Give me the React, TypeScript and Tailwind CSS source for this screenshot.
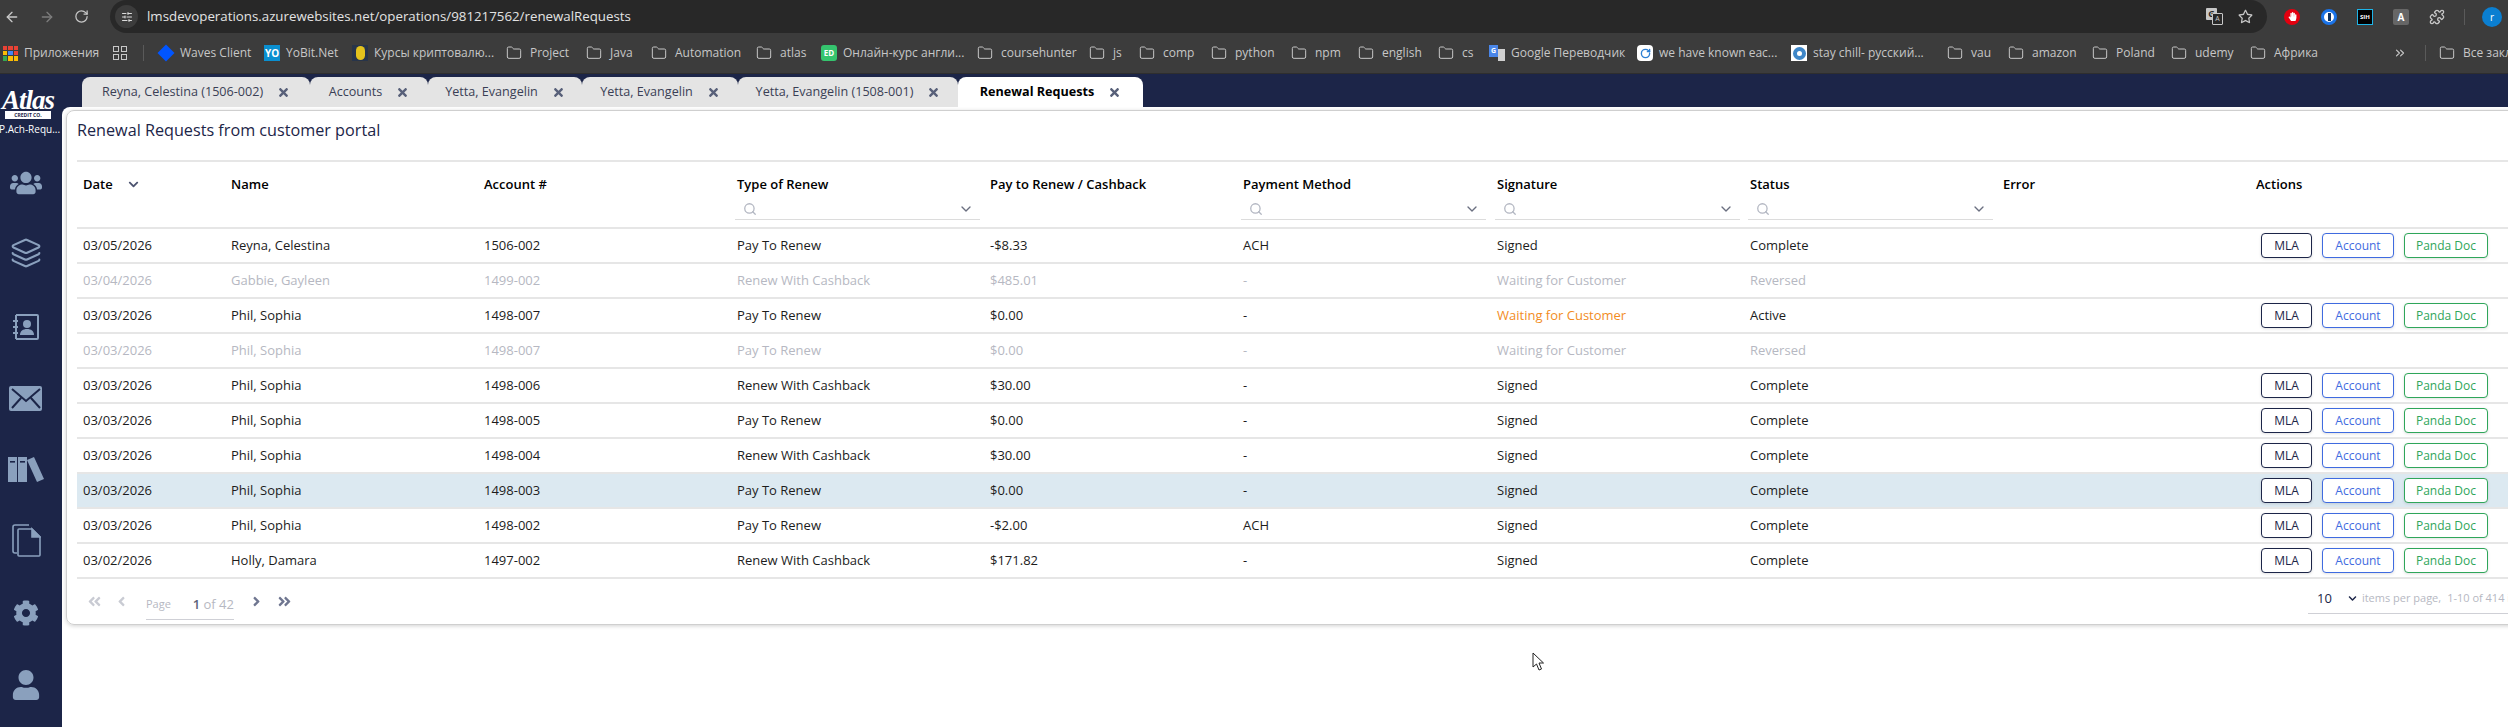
import React from "react";
import { FaCog, FaTimes, FaChevronDown, FaAngleDoubleLeft, FaAngleDoubleRight, FaAngleLeft, FaAngleRight, FaUsers, FaUser, FaRegStar, FaHandPaper } from "react-icons/fa";
import { ArrowLeft, ArrowRight, RotateCw, SlidersHorizontal, Folder, Puzzle, ChevronDown, ChevronsRight, Search, Layers } from "lucide-react";

const GRID = "grid grid-cols-[148px_253px_253px_253px_253px_254px_253px_253px_253px_260px]";

type Row = { date: string; name: string; acc: string; type: string; pay: string; method: string; sig: string; status: string; off?: boolean; orange?: boolean; sel?: boolean };
const rows: Row[] = [
  { date: "03/05/2026", name: "Reyna, Celestina", acc: "1506-002", type: "Pay To Renew", pay: "-$8.33", method: "ACH", sig: "Signed", status: "Complete" },
  { date: "03/04/2026", name: "Gabbie, Gayleen", acc: "1499-002", type: "Renew With Cashback", pay: "$485.01", method: "-", sig: "Waiting for Customer", status: "Reversed", off: true },
  { date: "03/03/2026", name: "Phil, Sophia", acc: "1498-007", type: "Pay To Renew", pay: "$0.00", method: "-", sig: "Waiting for Customer", status: "Active", orange: true },
  { date: "03/03/2026", name: "Phil, Sophia", acc: "1498-007", type: "Pay To Renew", pay: "$0.00", method: "-", sig: "Waiting for Customer", status: "Reversed", off: true },
  { date: "03/03/2026", name: "Phil, Sophia", acc: "1498-006", type: "Renew With Cashback", pay: "$30.00", method: "-", sig: "Signed", status: "Complete" },
  { date: "03/03/2026", name: "Phil, Sophia", acc: "1498-005", type: "Pay To Renew", pay: "$0.00", method: "-", sig: "Signed", status: "Complete" },
  { date: "03/03/2026", name: "Phil, Sophia", acc: "1498-004", type: "Renew With Cashback", pay: "$30.00", method: "-", sig: "Signed", status: "Complete" },
  { date: "03/03/2026", name: "Phil, Sophia", acc: "1498-003", type: "Pay To Renew", pay: "$0.00", method: "-", sig: "Signed", status: "Complete", sel: true },
  { date: "03/03/2026", name: "Phil, Sophia", acc: "1498-002", type: "Pay To Renew", pay: "-$2.00", method: "ACH", sig: "Signed", status: "Complete" },
  { date: "03/02/2026", name: "Holly, Damara", acc: "1497-002", type: "Renew With Cashback", pay: "$171.82", method: "-", sig: "Signed", status: "Complete" },
];

const tabs = [
  { t: "Reyna, Celestina (1506-002)", w: "w-[228px]" },
  { t: "Accounts", w: "w-[118px]" },
  { t: "Yetta, Evangelin", w: "w-[154px]" },
  { t: "Yetta, Evangelin", w: "w-[156px]" },
  { t: "Yetta, Evangelin (1508-001)", w: "w-[220px]" },
];

function Glyph({ kind }: { kind: string }) {
  if (kind === "folder") return <Folder size={16} strokeWidth={1.5} className="text-[#c7c7c7] shrink-0" />;
  if (kind === "waves") return <span className="w-[12px] h-[12px] mx-[2px] bg-[#0055ff] rotate-45 shrink-0" />;
  if (kind === "yo") return <span className="w-[16px] h-[16px] bg-[#0a8fd0] text-white text-[10px] font-bold leading-[16px] text-center shrink-0">YO</span>;
  if (kind === "coin") return <span className="w-[16px] h-[16px] bg-[#27344a] flex items-center justify-center shrink-0"><span className="w-[9px] h-[14px] rounded-full bg-[#e3c21d]" /></span>;
  if (kind === "ed") return <span className="w-[16px] h-[16px] rounded-[3px] bg-[#35c46e] text-white text-[8px] font-bold leading-[16px] text-center shrink-0">ED</span>;
  if (kind === "g") return <span className="w-[16px] h-[16px] flex shrink-0"><span className="w-[9px] h-[12px] bg-[#4a86e8] text-white text-[7px] leading-[12px] text-center font-bold">G</span><span className="w-[7px] h-[12px] mt-[4px] bg-[#d0d0d0]" /></span>;
  if (kind === "wk") return <span className="w-[16px] h-[16px] rounded-[4px] bg-white flex items-center justify-center shrink-0"><RotateCw size={11} strokeWidth={3} className="text-[#2d7fd3]" /></span>;
  if (kind === "stay") return <span className="w-[16px] h-[16px] bg-white flex items-center justify-center shrink-0"><span className="w-[13px] h-[13px] rounded-full border-[4px] border-[#3d86c8]" /></span>;
  return null;
}

const marks: { k: string; t: string; w: string }[] = [
  { k: "waves", t: "Waves Client", w: "w-[106px]" },
  { k: "yo", t: "YoBit.Net", w: "w-[88px]" },
  { k: "coin", t: "Курсы криптовалю...", w: "w-[154px]" },
  { k: "folder", t: "Project", w: "w-[80px]" },
  { k: "folder", t: "Java", w: "w-[65px]" },
  { k: "folder", t: "Automation", w: "w-[105px]" },
  { k: "folder", t: "atlas", w: "w-[65px]" },
  { k: "ed", t: "Онлайн-курс англи...", w: "w-[156px]" },
  { k: "folder", t: "coursehunter", w: "w-[112px]" },
  { k: "folder", t: "js", w: "w-[50px]" },
  { k: "folder", t: "comp", w: "w-[72px]" },
  { k: "folder", t: "python", w: "w-[80px]" },
  { k: "folder", t: "npm", w: "w-[67px]" },
  { k: "folder", t: "english", w: "w-[80px]" },
  { k: "folder", t: "cs", w: "w-[51px]" },
  { k: "g", t: "Google Переводчик", w: "w-[148px]" },
  { k: "wk", t: "we have known eac...", w: "w-[154px]" },
  { k: "stay", t: "stay chill- русский...", w: "w-[156px]" },
  { k: "folder", t: "vau", w: "w-[61px]" },
  { k: "folder", t: "amazon", w: "w-[84px]" },
  { k: "folder", t: "Poland", w: "w-[79px]" },
  { k: "folder", t: "udemy", w: "w-[79px]" },
  { k: "folder", t: "Африка", w: "w-[145px]" },
];

function Toolbar() {
  return (
    <div className="h-[33px] bg-[#3c3c3c] flex items-center shrink-0">
      <div className="w-[110px] flex items-center pl-[4px] gap-[19px] shrink-0">
        <ArrowLeft size={16} className="text-[#c7c7c7]" />
        <ArrowRight size={16} className="text-[#7c7c7c]" />
        <RotateCw size={15} className="text-[#c7c7c7]" />
      </div>
      <div className="w-[2157px] h-[33px] rounded-full bg-[#282828] flex items-center pl-[5px] pr-[14px] shrink-0">
        <span className="w-[23px] h-[23px] rounded-full bg-[#3c3c3c] flex items-center justify-center shrink-0">
          <SlidersHorizontal size={12} className="text-[#dcdcdc]" />
        </span>
        <span className="ml-[9px] text-[13.3px] text-[#e3e3e3]">lmsdevoperations.azurewebsites.net/operations/981217562/renewalRequests</span>
        <span className="ml-auto flex items-center gap-[15px]">
          <span className="relative w-[17px] h-[17px] block">
            <span className="absolute left-0 top-0 w-[11px] h-[12px] rounded-[1px] bg-[#c7c7c7] text-[#282828] text-[9px] font-bold leading-[12px] text-center">G</span>
            <span className="absolute right-0 bottom-0 w-[11px] h-[12px] rounded-[1px] border border-[#c7c7c7] bg-[#282828] text-[#c7c7c7] text-[7px] leading-[10px] text-center">A</span>
          </span>
          <FaRegStar size={15} className="text-[#c7c7c7]" />
        </span>
      </div>
      <div className="flex items-center ml-[17px]">
        <span className="w-[16px] h-[16px] rounded-full bg-[#e3000f] flex items-center justify-center"><FaHandPaper size={9} className="text-white" /></span>
        <span className="ml-[21px] w-[16px] h-[16px] rounded-full bg-white border-[3px] border-[#1a73e8] flex items-center justify-center"><span className="w-[3px] h-[8px] bg-[#10325f]" /></span>
        <span className="ml-[20px] w-[16px] h-[16px] bg-black border border-[#1eb4e8] text-white text-[6px] font-bold leading-[14px] text-center">SIH</span>
        <span className="ml-[20px] w-[16px] h-[16px] rounded-[2px] bg-[#666] text-white text-[10px] font-bold leading-[16px] text-center">A</span>
        <Puzzle size={16} className="ml-[20px] text-[#c7c7c7]" />
        <span className="ml-[19px] w-[1px] h-[16px] bg-[#5a5a5a]" />
        <span className="ml-[17px] w-[20px] h-[20px] rounded-full bg-[#0b7fd1] text-white text-[10px] leading-[20px] text-center">r</span>
      </div>
    </div>
  );
}

function Bookmarks() {
  return (
    <div className="h-[41px] bg-[#3c3c3c] border-b border-[#2e2e2e] flex items-center text-[12px] text-[#c7c7c7] shrink-0 whitespace-nowrap overflow-hidden">
      <span className="ml-[3px] w-[15px] h-[15px] grid grid-cols-3 gap-[1px] shrink-0">
        {["#e94235", "#e94235", "#e94235", "#fbbc04", "#4285f4", "#e94235", "#34a853", "#fbbc04", "#fbbc04"].map((c, i) => (
          <span key={i} className={c === "#e94235" ? "bg-[#e94235]" : c === "#fbbc04" ? "bg-[#fbbc04]" : c === "#4285f4" ? "bg-[#4285f4]" : "bg-[#34a853]"} />
        ))}
      </span>
      <span className="ml-[6px] w-[89px] shrink-0">Приложения</span>
      <span className="w-[14px] h-[14px] grid grid-cols-2 gap-[2px] shrink-0">
        {[0, 1, 2, 3].map((i) => <span key={i} className="border-[1.5px] border-[#c7c7c7]" />)}
      </span>
      <span className="ml-[16px] mr-[14px] w-[1px] h-[16px] bg-[#5a5a5a] shrink-0" />
      {marks.map((m, i) => (
        <span key={i} className={`flex items-center gap-[6px] shrink-0 ${m.w}`}>
          <Glyph kind={m.k} />
          <span className={m.k === "folder" ? "ml-[2px]" : ""}>{m.t}</span>
        </span>
      ))}
      <ChevronsRight size={14} className="shrink-0 text-[#c7c7c7] -ml-[2px]" />
      <span className="ml-[18px] mr-[13px] w-[1px] h-[16px] bg-[#5a5a5a] shrink-0" />
      <span className="flex items-center gap-[8px] shrink-0"><Folder size={16} strokeWidth={1.5} className="shrink-0" /><span>Все закладки</span></span>
    </div>
  );
}

function Sidebar() {
  const ic = "text-[#8aa0bd]";
  return (
    <aside className="w-[62px] shrink-0 bg-[#1c2548] flex flex-col items-center pr-[10px] overflow-hidden">
      <div className="h-[65px] w-[62px] -mr-[10px] flex flex-col items-center pt-[17px] shrink-0 text-white">
        <span className="font-['Liberation_Serif',serif] italic font-bold text-[27px] leading-[19px] tracking-[-1px] -ml-[6px]">Atlas</span>
        <span className="mt-[1px] -ml-[6px] w-[46px] h-[8px] bg-white text-[#1c2548] text-[5px] font-bold leading-[8px] text-center">CREDIT CO.</span>
        <span className="mt-[3px] self-start -ml-[1px] text-[10px] leading-[14px] whitespace-nowrap">P.Ach-Requ...</span>
      </div>
      <FaUsers size={32} className={`${ic} mt-[28px]`} />
      <Layers size={32} strokeWidth={1.6} className={`${ic} mt-[38px]`} />
      <svg width="28" height="26" viewBox="0 0 28 26" className={`${ic} mt-[45px]`} fill="none" stroke="currentColor" strokeWidth="2">
        <path d="M4 1h21a1 1 0 0 1 1 1v22a1 1 0 0 1-1 1H4" />
        <path d="M4 1v24M1 7h5M1 13h5M1 19h5" />
        <circle cx="15" cy="10" r="4" fill="currentColor" stroke="none" />
        <path d="M8 21c0-4 3-6 7-6s7 2 7 6z" fill="currentColor" stroke="none" />
      </svg>
      <svg width="34" height="26" viewBox="0 0 34 26" className={`${ic} mt-[46px]`} fill="none">
        <rect x="0" y="0" width="33" height="25" rx="2" fill="currentColor" />
        <path d="M3 3l14 12L31 3M3 22l9-10M31 22l-9-10" stroke="#1c2548" strokeWidth="2" />
      </svg>
      <svg width="36" height="26" viewBox="0 0 36 26" className={`${ic} mt-[45px]`} fill="currentColor">
        <rect x="0" y="0" width="9" height="25" />
        <rect x="10" y="0" width="9" height="25" />
        <path d="M19 3l7-3 10 22-7 3z" />
        <rect x="2" y="4" width="5" height="1.6" fill="#1c2548" />
        <rect x="12" y="4" width="5" height="1.6" fill="#1c2548" />
      </svg>
      <svg width="29" height="33" viewBox="0 0 29 33" className={`${ic} mt-[41px]`} fill="none" stroke="currentColor" strokeWidth="1.6">
        <path d="M5 29H3a2 2 0 0 1-2-2V3a2 2 0 0 1 2-2h14" />
        <path d="M6 31V6a1 1 0 0 1 1-1h13l8 8v18a1 1 0 0 1-1 1H7a1 1 0 0 1-1-1z" />
        <path d="M20 5l8 8h-8z" fill="currentColor" />
      </svg>
      <FaCog size={26} className={`${ic} mt-[43px]`} />
      <FaUser size={30} className={`${ic} mt-[44px]`} />
    </aside>
  );
}

function Tabs() {
  return (
    <div className="h-[33px] pt-[3px] flex shrink-0 pl-[20px] text-[12.6px] bg-[#1c2548]">
      <div className="flex bg-[linear-gradient(transparent_8px,#e4e4e4_8px)] rounded-tl-[8px]">
        {tabs.map((t, i) => (
          <div key={i} className={`${t.w} h-[30px] bg-[#e4e4e4] rounded-t-[8px] flex items-center justify-center gap-[14px] text-[#3a3f55]`}>
            <span>{t.t}</span>
            <FaTimes size={13} className="text-[#586079]" />
          </div>
        ))}
      </div>
      <div className="w-[185px] h-[30px] bg-white rounded-t-[8px] flex items-center justify-center gap-[14px] font-bold text-black">
        <span>Renewal Requests</span>
        <FaTimes size={13} className="text-[#586079]" />
      </div>
    </div>
  );
}

function Filter() {
  return (
    <div className="ml-[4px] w-[245px] h-[22px] border-b border-[#dcdcdc] flex items-center pl-[8px] pr-[6px] -mt-[3px]">
      <Search size={14} strokeWidth={2.2} className="text-[#b3b7c2]" />
      <ChevronDown size={16} className="ml-auto text-[#6a6f80]" />
    </div>
  );
}

function Btn({ c, w, t }: { c: string; w: string; t: string }) {
  return <span className={`${w} h-[25px] rounded-[4px] border bg-white shadow-[0_1px_3px_rgba(0,0,0,0.12)] flex items-center justify-center text-[12px] font-medium ${c}`}>{t}</span>;
}

function Table() {
  const heads = ["Date", "Name", "Account #", "Type of Renew", "Pay to Renew / Cashback", "Payment Method", "Signature", "Status", "Error", "Actions"];
  return (
    <div className="w-[2431px]">
      <div className={`${GRID} h-[69px] border-t-2 border-b-2 border-[#e6e6e6] text-[13px] font-semibold text-black`}>
        {heads.map((h, i) => (
          <div key={h} className="flex flex-col pt-[13px]">
            <div className="pl-[6px] h-[18px] leading-[18px] flex items-center gap-[15px]">
              {h}
              {i === 0 && <FaChevronDown size={11} className="text-[#4d5470]" />}
            </div>
            <div className="h-[20px] mt-[8px]">
              {(i === 3 || i === 5 || i === 6 || i === 7) && <Filter />}
            </div>
          </div>
        ))}
      </div>
      {rows.map((r, i) => {
        const tone = r.off ? "text-[#b6b8c2]" : "text-[#1c1c1c]";
        return (
          <div key={i} className={`${GRID} h-[35px] items-center border-b-2 border-[#e6e6e6] text-[13px] ${tone} ${r.sel ? "bg-[#dce9f1]" : "bg-white"}`}>
            <div className="pl-[6px]">{r.date}</div>
            <div className="pl-[6px]">{r.name}</div>
            <div className="pl-[6px]">{r.acc}</div>
            <div className="pl-[6px]">{r.type}</div>
            <div className="pl-[6px]">{r.pay}</div>
            <div className="pl-[6px]">{r.method}</div>
            <div className={`pl-[6px] ${r.orange ? "text-[#f28c1e]" : ""}`}>{r.sig}</div>
            <div className="pl-[6px]">{r.status}</div>
            <div />
            {r.off ? <div /> : (
              <div className="flex pl-[11px] gap-[10px]">
                <Btn c="border-[#1c2548] text-[#1c2548]" w="w-[51px]" t="MLA" />
                <Btn c="border-[#3f6be0] text-[#3f6be0]" w="w-[72px]" t="Account" />
                <Btn c="border-[#2fa65a] text-[#2fa65a]" w="w-[84px]" t="Panda Doc" />
              </div>
            )}
          </div>
        );
      })}
    </div>
  );
}

function Pager() {
  return (
    <div className="h-[44px] w-[2431px] flex items-start text-[13px] text-[#b6b8c2]">
      <div className="flex items-center h-[44px]">
        <FaAngleDoubleLeft size={15} className="ml-[10px] text-[#c9cbd3]" />
        <FaAngleLeft size={15} className="ml-[12px] text-[#c9cbd3]" />
        <div className="ml-[17px] w-[88px] h-[27px] mt-[10px] border-b border-[#cfd0d6] flex items-start justify-between">
          <span className="text-[11px] leading-[22px]">Page</span>
          <span className="leading-[22px]"><b className="font-semibold text-[#5d6378]">1</b> of 42</span>
        </div>
        <FaAngleRight size={15} className="ml-[15px] text-[#6f7690]" />
        <FaAngleDoubleRight size={15} className="ml-[13px] text-[#6f7690]" />
      </div>
      <div className="ml-auto mt-[5px] w-[200px] h-[30px] border-b border-[#cfd0d6] flex items-center whitespace-nowrap overflow-hidden text-[11px]">
        <span className="ml-[9px] text-[13px] text-[#1c2548]">10</span>
        <FaChevronDown size={9} className="ml-[16px] mr-[5px] text-[#1c2548] shrink-0" />
        <span>items per page,</span>
        <span className="ml-[6px]">1-10 of 414 items</span>
      </div>
    </div>
  );
}

export default function App() {
  return (
    <div className="w-[2508px] h-[727px] overflow-hidden flex flex-col bg-white relative font-['Open_Sans',sans-serif]">
      <Toolbar />
      <Bookmarks />
      <div className="flex flex-1 min-h-0">
        <Sidebar />
        <div className="flex-1 min-w-0 flex flex-col bg-[#1c2548]">
          <Tabs />
          <div className="bg-white rounded-tl-[8px] pl-[4px] pt-[3px] flex-1 min-h-0 overflow-hidden">
            <div className="w-[2500px] h-[515px] border border-[#cfcfcf] rounded-[8px] shadow-[0_1px_4px_rgba(0,0,0,0.18)] pl-[10px] overflow-hidden">
              <h1 className="h-[49px] pt-[8px] text-[16.2px] leading-[22px] font-normal text-[#1c2548]">Renewal Requests from customer portal</h1>
              <Table />
              <Pager />
            </div>
          </div>
        </div>
      </div>
      <svg width="13" height="20" viewBox="0 0 13 20" className="absolute left-[1532px] top-[652px]">
        <path d="M1 1v14l3.5-3 2.5 6 2.5-1-2.5-6h4.5z" fill="#fff" stroke="#222" strokeWidth="1" />
      </svg>
    </div>
  );
}
